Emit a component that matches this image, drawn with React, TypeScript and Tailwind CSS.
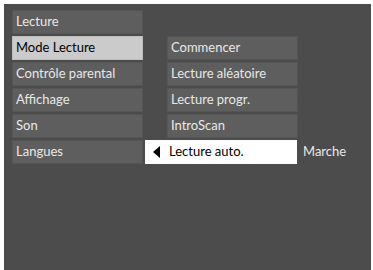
const left = ["Lecture", "Mode Lecture", "Contrôle parental", "Affichage", "Son", "Langues"]
const right = ["", "Commencer", "Lecture aléatoire", "Lecture progr.", "IntroScan"]

function Item({ label, active }: { label: string; active?: boolean }) {
  return (
    <div
      className={
        active
          ? "flex h-[24px] w-[131px] items-center border border-[#bdbdbd] bg-[#cbcbcb] pl-[3px] text-black"
          : "flex h-[24px] w-[131px] items-center border border-[#555] bg-[#5e5e5e] pl-[3px] text-[#e8e8e8]"
      }
    >
      {label}
    </div>
  )
}

export default function App() {
  return (
    <div
      className="flex h-[270px] w-[373px] bg-white pl-[4px] pr-[2px] pt-[4px] text-[13px]"
      style={{ fontFamily: "Lato, 'Open Sans', sans-serif" }}
    >
      <div className="flex flex-1 flex-col gap-[2px] bg-[#4c4c4c] pl-[8px] pt-[6px]">
        {left.map((label, i) => (
          <div key={label} className="flex items-center">
            <Item label={label} active={i === 1} />
            {i < 5 ? (
              right[i] ? (
                <div className="ml-[24px]">
                  <Item label={right[i]} />
                </div>
              ) : null
            ) : (
              <>
                <div className="ml-[2px] flex h-[24px] w-[152px] items-center bg-white text-black">
                  <svg width="7" height="12" viewBox="0 0 7 12" className="ml-[8px]">
                    <path d="M7 0 L0 6 L7 12 Z" fill="#000" />
                  </svg>
                  <span className="ml-[9px]">Lecture auto.</span>
                </div>
                <span className="ml-[6px] text-[#e8e8e8]">Marche</span>
              </>
            )}
          </div>
        ))}
      </div>
    </div>
  )
}
